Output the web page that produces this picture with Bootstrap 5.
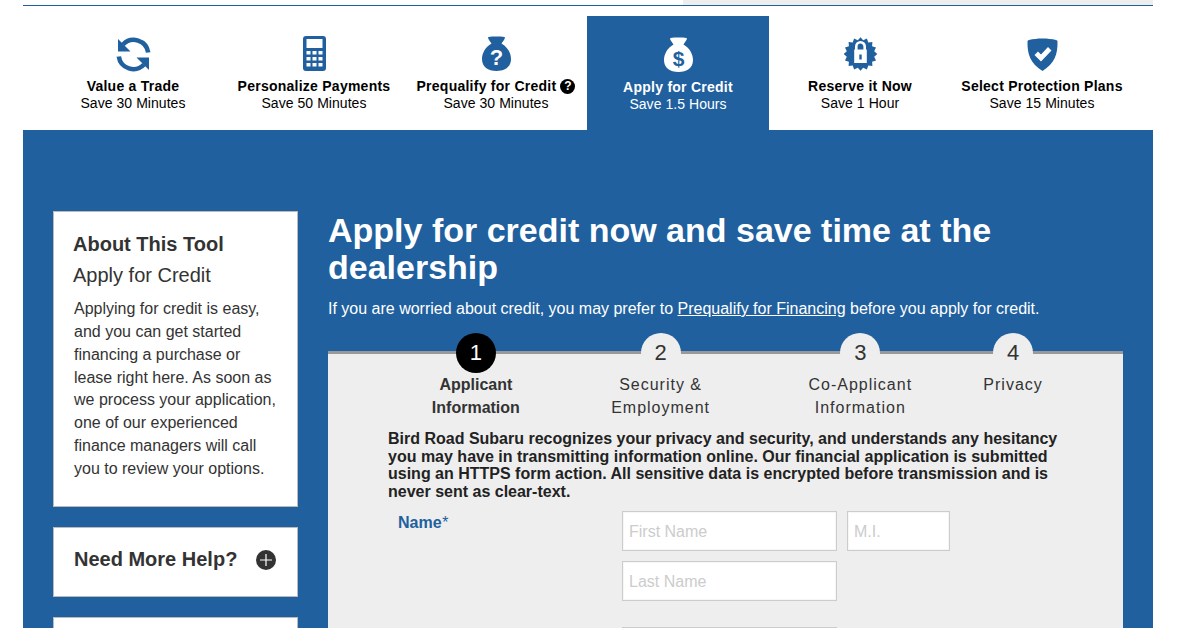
<!DOCTYPE html>
<html lang="en">
<head>
<meta charset="UTF-8">
<title>Apply for Credit</title>
<link href="https://cdn.jsdelivr.net/npm/bootstrap@5.3.0/dist/css/bootstrap.min.css" rel="stylesheet">
<style>
body { background: #fff; font-family: "Liberation Sans", Arial, sans-serif; color: #333; overflow-x: hidden; }
.page-wrap { width: 1130px; margin-left: 23px; }
.top-strip { height: 6px; border-bottom: 1px solid #20609e; }
.top-strip div { width: 470px; background: #eee; height: 5px; margin-left: auto; }
.tool-tabs { padding: 10px 20px 0 18px; height: 124px; }
.tool-tab { width: 182px; padding-top: 20px; text-align: center; color: #000; font-size: 14px; line-height: 17px; letter-spacing: .05px; }
.tool-tab svg { display: block; margin: 0 auto; fill: #20609e; }
.tool-tab strong { display: block; margin-top: 5px; letter-spacing: .25px; white-space: nowrap; }
.tool-tab.first-tab { padding-left: 2px; }
.tool-tab.active-tab { background: #20609e; color: #fff; padding-top: 21px; }
.tool-tab.active-tab svg { fill: #fff; }
.help-dot { display: inline-block; width: 15px; height: 15px; border-radius: 50%; background: #000; color: #fff; font-size: 12px; line-height: 15px; letter-spacing: 0; vertical-align: 1px; }
.refresh-glyph { margin-top: -2px !important; margin-bottom: -2px !important; }
.refresh-glyph path { fill: none; stroke: #20609e; stroke-width: 4.6; }
.tool-tab svg .lock-shackle { fill: none; stroke: #fff; stroke-width: 2.6; }
.tool-tab svg .lock-body { fill: #fff; }
.blue-panel { background: #20609e; padding: 81px 30px 0; gap: 30px; height: 498px; overflow: hidden; }
.side-col { width: 245px; flex: none; }
.side-box { background: #fff; border: 1px solid #bbb; margin-bottom: 20px; padding: 20px 19px; }
.side-box h2 { font-size: 20px; font-weight: 700; line-height: 24px; margin: 0 0 7px; }
.side-box h3 { font-size: 20px; font-weight: 400; line-height: 24px; margin: 0 0 11px; }
.side-box p { font-size: 16px; line-height: 22.85px; margin: 0 0 5px; padding-left: 1px; }
.help-box { height: 70px; display: flex; align-items: center; justify-content: space-between; padding: 0 21px 6px 20px; }
.help-box span { font-size: 20px; font-weight: 700; }
.plus-dot { width: 20px; height: 20px; margin-top: 3px; }
.blank-box { height: 70px; }
.main-col { width: 795px; flex: none; color: #fff; }
.main-col h1 { font-size: 34px; font-weight: 700; line-height: 37px; margin: 1px 0 11px; }
.main-col .intro { font-size: 16px; line-height: 23px; margin: 0; }
.main-col .intro a { color: #fff; }
.form-panel { background: #eee; border-top: 3px solid #999; margin-top: 31px; color: #333; padding: 0 60px; }
.step-row { margin-top: -21px; }
.step-item { text-align: center; font-size: 16px; line-height: 23px; letter-spacing: 1px; }
.step-item .step-num { width: 40px; height: 40px; border-radius: 50%; background: #eee; margin: 0 auto; font-size: 22px; line-height: 40px; letter-spacing: 0; }
.step-item.on { font-weight: 700; letter-spacing: 0; }
.step-item.on .step-num { background: #000; color: #fff; font-weight: 400; }
.step-a { width: 176px; } .step-b { width: 194px; } .step-c { width: 206px; } .step-d { width: 100px; }
.privacy-note { font-size: 16px; font-weight: 700; line-height: 17.7px; margin: 11px 0 0; width: 680px; color: #222; }
.name-row { margin-top: 10px; }
.name-label { width: 234px; flex: none; padding-left: 10px; color: #20609e; font-weight: 700; font-size: 16px; }
.name-label i { font-weight: 400; }
.name-inputs { column-gap: 10px; }
.name-field { width: 215px; height: 40px; border: 1px solid #ccc; background: #fff; font-size: 16px; padding: 2px 6px 0; border-radius: 0; box-shadow: inset 0 0 0 1px #f6f6f6; outline: 0; }
.name-field::placeholder { color: #ccc; }
.name-field.short-field { width: 103px; }
.last-field { margin-top: 10px; }
.next-field { margin-top: 26px; margin-left: 234px; }
</style>
</head>
<body>
<div class="page-wrap">
  <div class="top-strip"><div></div></div>
  <div class="tool-tabs d-flex">
    <div class="tool-tab first-tab">
      <svg class="refresh-glyph" width="41" height="41" viewBox="0 0 41 41"><path d="M35.200 18.500A14.700 14.700 0 0 0 10 10.500"/><path d="M5.800 22.500A14.700 14.700 0 0 0 31 30.500"/><polygon points="5,5 5,17.500 17.500,17.500"/><polygon points="36,36 36,23.500 23.500,23.500"/></svg>
      <strong>Value a Trade</strong>Save 30 Minutes
    </div>
    <div class="tool-tab">
      <svg width="41" height="37" viewBox="0 0 41 37"><path fill-rule="evenodd" d="M12 0h17a3 3 0 0 1 3 3v29a3 3 0 0 1-3 3H12a3 3 0 0 1-3-3V3a3 3 0 0 1 3-3zm.5 3v9h16V3zM12.500 15v3.500h4V15zm6 0v3.500h4V15zm6 0v3.500h4V15zm-12 6v3.500h4V21zm6 0v3.500h4V21zm6 0v3.500h4V21zm-12 6v3.500h4V27zm6 0v3.500h4V27zm6 0v3.500h4V27z"/></svg>
      <strong>Personalize Payments</strong>Save 50 Minutes
    </div>
    <div class="tool-tab">
      <svg width="41" height="37" viewBox="0 0 41 37"><path d="M12.500 1c2.500-1 5-.5 8-.5s5.500-.5 8 .5c1.500.8-1.500 4-3 6.500 6 3.500 9.500 9.500 9.500 15.500 0 8-6 12-14.500 12S6 31 6 23c0-6 3.500-12 9.500-15.500C14 5 11 1.800 12.500 1z"/><text x="20.500" y="29" text-anchor="middle" font-family="Liberation Sans" font-weight="700" font-size="22" fill="#fff">?</text></svg>
      <strong>Prequalify for Credit <span class="help-dot">?</span></strong>Save 30 Minutes
    </div>
    <div class="tool-tab active-tab">
      <svg width="41" height="37" viewBox="0 0 41 37"><path d="M12.500 1c2.500-1 5-.5 8-.5s5.500-.5 8 .5c1.500.8-1.500 4-3 6.500 6 3.500 9.500 9.500 9.500 15.500 0 8-6 12-14.500 12S6 31 6 23c0-6 3.500-12 9.500-15.500C14 5 11 1.800 12.500 1z"/><text x="20.500" y="29" text-anchor="middle" font-family="Liberation Sans" font-weight="700" font-size="21" fill="#20609e">$</text></svg>
      <strong>Apply for Credit</strong>Save 1.5 Hours
    </div>
    <div class="tool-tab">
      <svg width="41" height="37" viewBox="-20.500 -18 41 37"><polygon points="16.800,0 13.700,2.700 15.500,6.400 11.600,7.800 11.900,11.900 7.800,11.600 6.400,15.500 2.700,13.700 0,16.800 -2.700,13.700 -6.400,15.500 -7.800,11.600 -11.900,11.900 -11.600,7.800 -15.500,6.400 -13.700,2.700 -16.800,0 -13.700,-2.700 -15.500,-6.400 -11.600,-7.800 -11.900,-11.900 -7.800,-11.600 -6.400,-15.500 -2.700,-13.700 0,-16.800 2.700,-13.700 6.400,-15.500 7.800,-11.600 11.900,-11.900 11.600,-7.800 15.500,-6.400 13.700,-2.700"/><path class="lock-shackle" d="M-4.200 -4v-3.500a4.200 4.200 0 0 1 8.400 0V-4"/><path class="lock-body" d="M-6.300 -4.500h12.600v13.500h-12.600z"/><path d="M-1.200 .5h2.400v5h-2.400z"/></svg>
      <strong>Reserve it Now</strong>Save 1 Hour
    </div>
    <div class="tool-tab">
      <svg width="41" height="37" viewBox="0 0 41 37"><path fill-rule="evenodd" d="M7 4C11 3 15.500 2.500 20.500 2.500S30 3 34 4c.8.2 1.500.8 1.500 1.500.3 13-3 22-15 29.500C8.500 27.500 5.200 18.500 5.500 5.500 5.500 4.800 6.200 4.200 7 4zm5.500 15l6.500 6.500L29.500 14.500 26 11 19 18.500 16 15.500z"/></svg>
      <strong>Select Protection Plans</strong>Save 15 Minutes
    </div>
  </div>
  <div class="blue-panel d-flex">
    <div class="side-col">
      <div class="side-box">
        <h2>About This Tool</h2>
        <h3>Apply for Credit</h3>
        <p>Applying for credit is easy, and you can get started financing a purchase or lease right here. As soon as we process your application, one of our experienced finance managers will call you to review your options.</p>
      </div>
      <div class="side-box help-box">
        <span>Need More Help?</span>
        <svg class="plus-dot" viewBox="0 0 20 20"><circle cx="10" cy="10" r="10" fill="#333"/><path d="M10 4v12M4 10h12" stroke="#fff" stroke-width="1.200"/></svg>
      </div>
      <div class="side-box blank-box"></div>
    </div>
    <div class="main-col">
      <h1>Apply for credit now and save time at the dealership</h1>
      <p class="intro">If you are worried about credit, you may prefer to <a href="#">Prequalify for Financing</a> before you apply for credit.</p>
      <div class="form-panel">
        <div class="step-row d-flex">
          <div class="step-item step-a on"><div class="step-num">1</div><div>Applicant<br>Information</div></div>
          <div class="step-item step-b"><div class="step-num">2</div><div>Security &amp;<br>Employment</div></div>
          <div class="step-item step-c"><div class="step-num">3</div><div>Co-Applicant<br>Information</div></div>
          <div class="step-item step-d"><div class="step-num">4</div><div>Privacy</div></div>
        </div>
        <p class="privacy-note">Bird Road Subaru recognizes your privacy and security, and understands any hesitancy you may have in transmitting information online. Our financial application is submitted using an HTTPS form action. All sensitive data is encrypted before transmission and is never sent as clear-text.</p>
        <div class="name-row d-flex">
          <div class="name-label">Name<i>*</i></div>
          <div>
            <div class="d-flex name-inputs">
              <input class="name-field" placeholder="First Name">
              <input class="name-field short-field" placeholder="M.I.">
            </div>
            <input class="name-field d-block last-field" placeholder="Last Name">
          </div>
        </div>
        <input class="name-field d-block next-field">
      </div>
    </div>
  </div>
</div>
</body>
</html>
